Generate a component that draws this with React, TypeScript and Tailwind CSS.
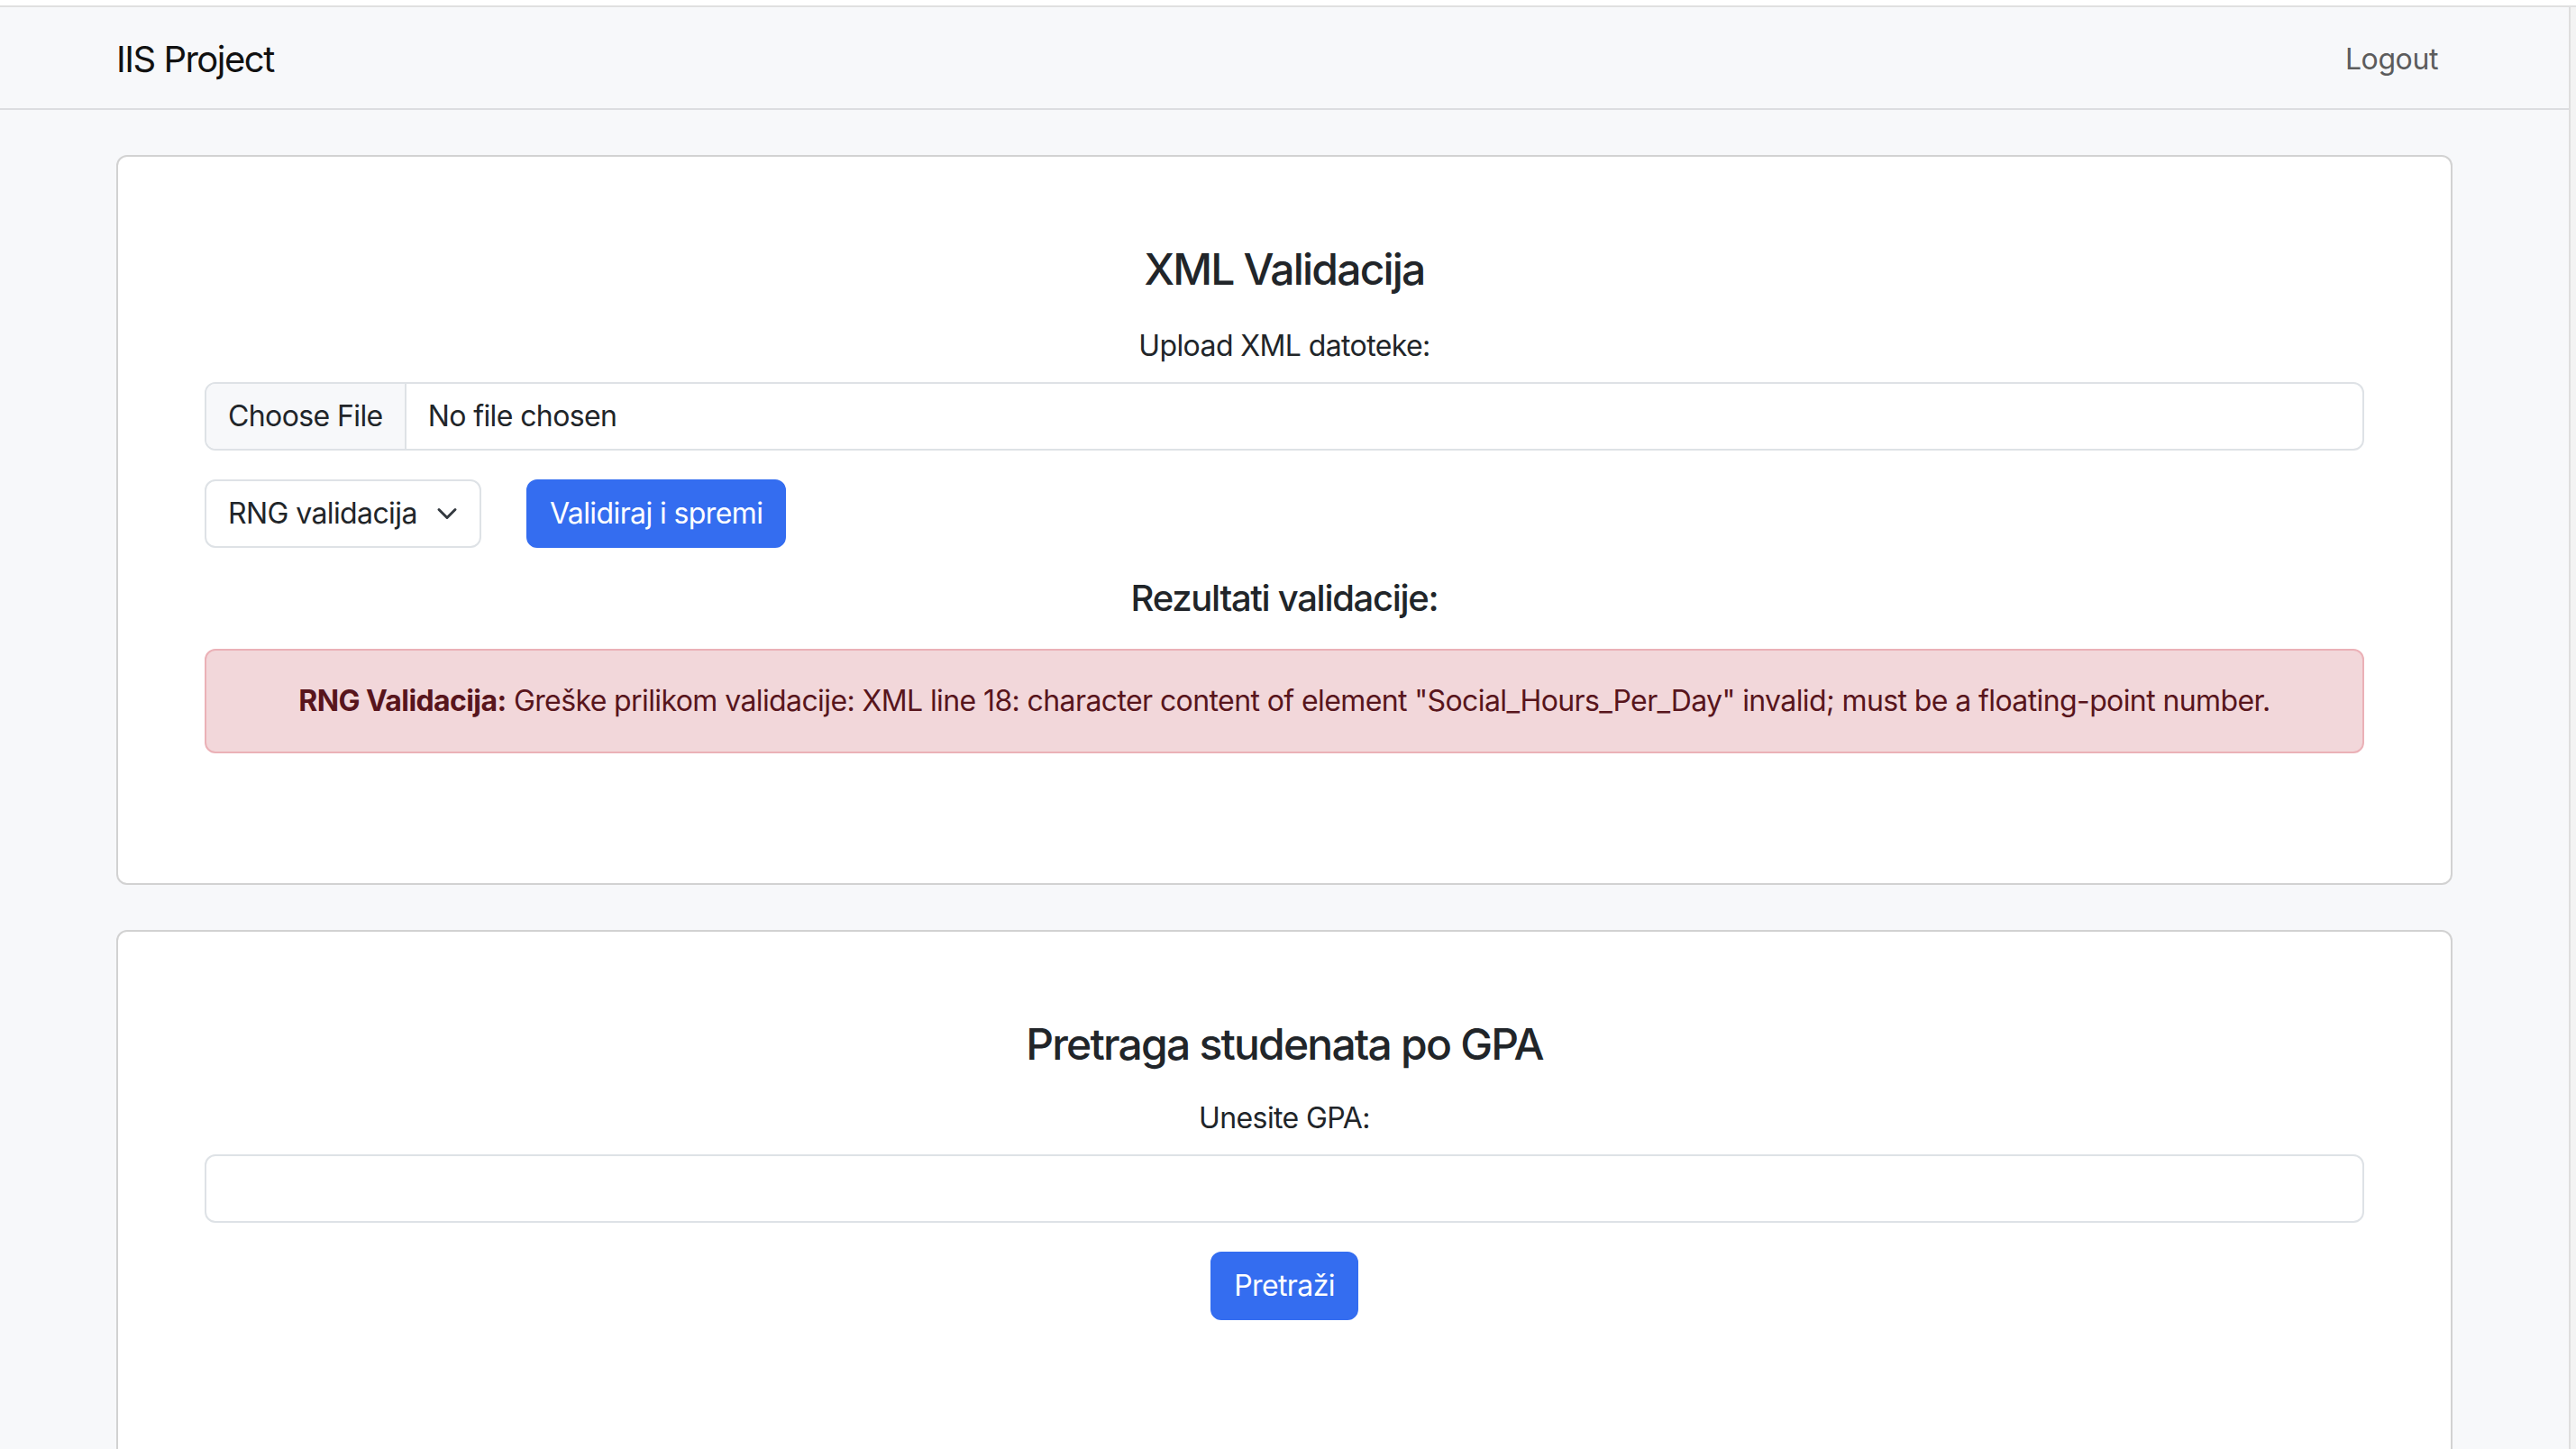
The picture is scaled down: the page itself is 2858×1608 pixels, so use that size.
import React from 'react';

const ChevronDown = () => (
  <svg width="24" height="24" viewBox="0 0 16 16" fill="none">
    <path d="m2 5 6 6 6-6" stroke="#343a40" strokeWidth="2" strokeLinecap="round" strokeLinejoin="round" />
  </svg>
);

const Navbar = () => (
  <nav className="bg-[#f7f8fa] border-b-2 border-[#dcdde0]">
    <div className="mx-auto w-[2640px] px-[24px] pt-[4px] h-[112px] flex items-center justify-between">
      <span className="text-[40px] leading-[60px] text-[#111] tracking-[-1.5px]">IIS Project</span>
      <a className="text-[32px] leading-[48px] text-[#5c5c5c] pr-[16px] tracking-[-0.4px]">Logout</a>
    </div>
  </nav>
);

const Card = ({ children, className = '' }: { children: React.ReactNode; className?: string }) => (
  <div className={`bg-white border-2 border-[#d2d2d2] rounded-[12px] p-[96px] text-center ${className}`}>
    {children}
  </div>
);

const ValidationCard = () => (
  <Card>
    <h4 className="text-[48px] leading-[57.6px] font-medium mb-[32px] tracking-[-1.8px]">XML Validacija</h4>
    <label className="block text-[32px] leading-[48px] mb-[16px] tracking-[-0.6px]">Upload XML datoteke:</label>
    <div className="flex h-[76px] border-2 border-[#dee2e6] rounded-[12px] overflow-hidden text-left text-[32px] tracking-[-0.6px] mb-[32px]">
      <div className="bg-[#f7f8fa] px-[24px] flex items-center border-r-2 border-[#dee2e6]">Choose File</div>
      <div className="px-[24px] flex items-center">No file chosen</div>
    </div>
    <div className="flex items-center gap-[50px] mb-[32px]">
      <div className="flex items-center w-[307px] h-[76px] border-2 border-[#dee2e6] rounded-[12px] pl-[24px] pr-[24px] text-[32px] tracking-[-0.6px]">
        <span>RNG validacija</span>
        <span className="ml-auto flex">
          <ChevronDown />
        </span>
      </div>
      <button className="h-[76px] px-[24px] rounded-[12px] bg-[#346df0] text-white text-[32px] tracking-[-0.6px] border-2 border-[#346df0]">
        Validiraj i spremi
      </button>
    </div>
    <h5 className="text-[40px] leading-[48px] font-medium mb-[32px] tracking-[-1.3px]">Rezultati validacije:</h5>
    <div className="bg-[#f2d7da] border-2 border-[#ebb1b7] rounded-[12px] p-[32px] text-[32px] leading-[48px] text-[#58151c] tracking-[-0.6px] mb-[48px]">
      <strong className="font-bold">RNG Validacija:</strong> Greške prilikom validacije: XML line 18: character content of element "Social_Hours_Per_Day" invalid; must be a floating-point number.
    </div>
  </Card>
);

const SearchCard = () => (
  <Card className="mt-[50px]">
    <h4 className="text-[48px] leading-[57.6px] font-medium mb-[30px] tracking-[-1.8px]">Pretraga studenata po GPA</h4>
    <label className="block text-[32px] leading-[48px] mb-[16px] tracking-[-0.6px]">Unesite GPA:</label>
    <input className="block w-full h-[76px] border-2 border-[#dee2e6] rounded-[12px] px-[24px] text-[32px] outline-none" />
    <button className="mt-[32px] h-[76px] px-[24px] rounded-[12px] bg-[#346df0] text-white text-[32px] tracking-[-0.6px] border-2 border-[#346df0]">
      Pretraži
    </button>
    <div className="h-[200px]" />
  </Card>
);

export default function App() {
  return (
    <div className="min-h-screen bg-white font-['Inter','Noto_Sans',sans-serif] text-[#212529]">
      <div className="h-[8px] bg-white border-b-2 border-[#e0e0e0]" />
      <div className="flex">
        <div className="flex-1 min-w-0 bg-[#f7f8fa]">
          <Navbar />
          <main className="mx-auto w-[2640px] px-[24px] pt-[50px]">
            <ValidationCard />
            <SearchCard />
          </main>
        </div>
        <div className="w-[8px] shrink-0 bg-[#f3f3f3] border-l-2 border-[#dedede]" />
      </div>
    </div>
  );
}
